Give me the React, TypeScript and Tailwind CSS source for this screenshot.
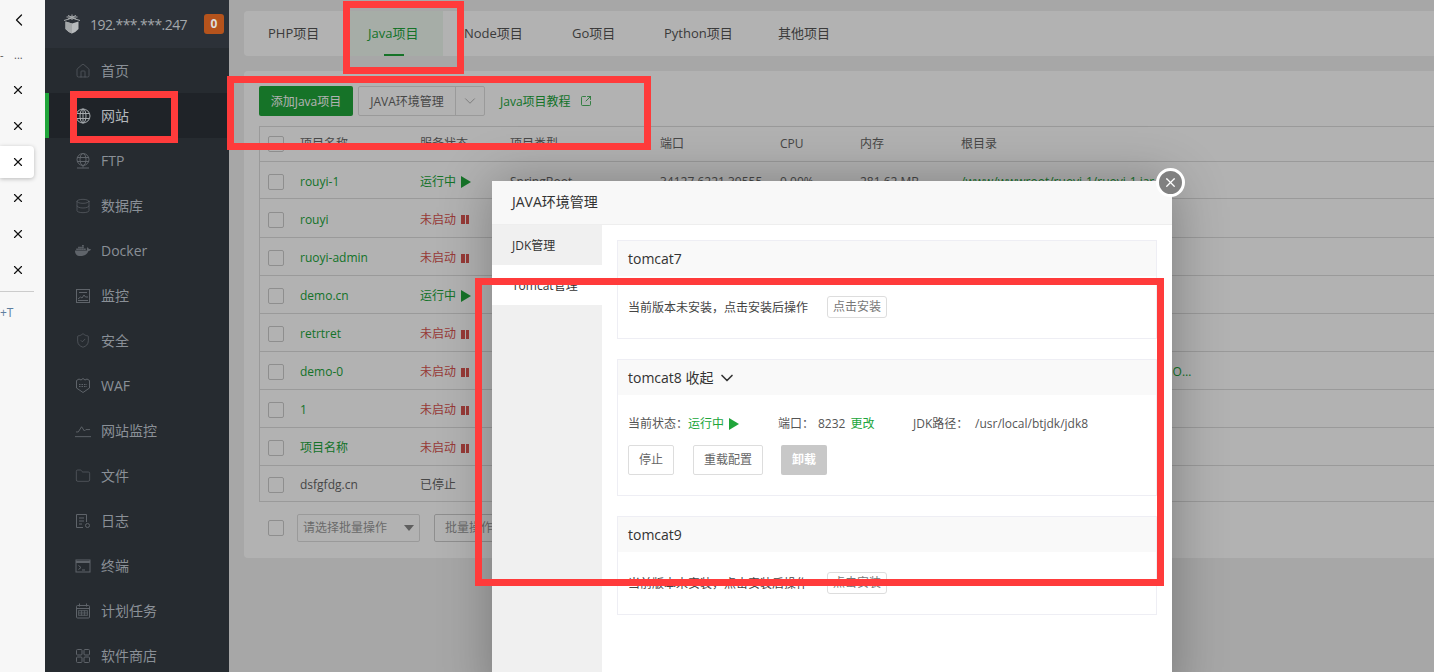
/**
 * Java project page with the JAVA environment dialog open
 * Red boxes are annotations drawn over the screenshot
 */

import { useState } from 'react';
import { ChevronDown, ChevronLeft, Database, Folder, Home, ShieldCheck, SquareArrowOutUpRight, X } from 'lucide-react';
import { FaDocker } from 'react-icons/fa';
import { clsx } from 'clsx';

const FONT = "[font-family:'Open_Sans','Noto_Sans_CJK_SC',sans-serif]";

function GlobeIcon({ bar }: { bar?: boolean }) {
  return (
    <svg width="16" height="16" viewBox="0 0 16 16" fill="none" stroke="currentColor" strokeWidth="1">
      <circle cx="8" cy={bar ? 6.5 : 8} r={bar ? 6 : 7} />
      <ellipse cx="8" cy={bar ? 6.5 : 8} rx="3" ry={bar ? 6 : 7} />
      <path d={bar ? 'M2 4.5h12M2 8.5h12M8 12.5v2M2 15h12' : 'M1.5 5.5h13M1.5 10.5h13M8 1v14'} />
    </svg>
  );
}

function MonitorIcon() {
  return (
    <svg width="16" height="16" viewBox="0 0 16 16" fill="none" stroke="currentColor" strokeWidth="1">
      <rect x="1.5" y="1.5" width="13" height="13" />
      <path d="M4 4.5h8M3 11l2.5-2 1.5 1 2-3 1.5 2H13M3 12.5h10" />
    </svg>
  );
}

function WafIcon() {
  return (
    <svg width="16" height="17" viewBox="0 0 16 17" fill="none" stroke="currentColor" strokeWidth="1">
      <path d="M1.5 3.5 4 2l2 1 2-1.5L10 3l2-1 2.5 1.5V11L8 15.5 1.5 11z" />
      <path d="M4 7.5h8M4 9.5h8" strokeDasharray="1.5 1" />
    </svg>
  );
}

function ChartIcon() {
  return (
    <svg width="17" height="14" viewBox="0 0 17 14" fill="none" stroke="currentColor" strokeWidth="1">
      <path d="M1 8h2.5L7 2.5 10 7l1.5-1.5H16M0 13h17" />
    </svg>
  );
}

function LogIcon() {
  return (
    <svg width="16" height="16" viewBox="0 0 16 16" fill="none" stroke="currentColor" strokeWidth="1">
      <path d="M8 14.5H1.5v-13h10V9M4 5h5M4 8h5M4 11h3" />
      <circle cx="12.5" cy="12.5" r="2" />
    </svg>
  );
}

function TerminalIcon() {
  return (
    <svg width="16" height="14" viewBox="0 0 16 14" fill="none" stroke="currentColor" strokeWidth="1">
      <rect x="1" y="1" width="14" height="12" />
      <path d="M1 3h14" strokeWidth="2" />
      <path d="M3.5 6.5 6 8.5l-2.5 2M7 11h3" />
    </svg>
  );
}

function CalendarIcon() {
  return (
    <svg width="16" height="16" viewBox="0 0 16 16" fill="none" stroke="currentColor" strokeWidth="1">
      <rect x="1.5" y="2.5" width="13" height="12.5" rx="1" />
      <path d="M1.5 5.5h13M4.5 0.5v3M11.5 0.5v3" />
      <path d="M3.5 7.5h9v5h-9zM3.5 9.2h9M3.5 10.9h9M6.5 7.5v5M9.5 7.5v5" strokeWidth="0.7" />
    </svg>
  );
}

function StoreIcon() {
  return (
    <svg width="16" height="16" viewBox="0 0 16 16" fill="none" stroke="currentColor" strokeWidth="1">
      <rect x="1.5" y="1.5" width="5.5" height="5.5" rx="1" />
      <rect x="9" y="1.5" width="5.5" height="5.5" rx="1" />
      <rect x="1.5" y="9" width="5.5" height="5.5" rx="1" />
      <rect x="9" y="9" width="5.5" height="5.5" rx="1" />
    </svg>
  );
}

function Logo() {
  return (
    <svg width="18" height="20" viewBox="0 0 18 20" className="shrink-0">
      <path d="M2.5 7.5 9 9.5l6.5-2V15q-3 3.5-6.5 4.5Q5.500 18.500 2.500 15z" fill="#b8bbbd" />
      <path d="M9 9.500v10Q5.500 18.500 2.500 15V7.500z" fill="#a4a7a9" />
      <path d="M1 6.500 9 4l8 2.500M3.500 3h11M9 0.500V6M5 1.500l8 3.500M13 1.500 5 5" fill="none" stroke="#a8abad" strokeWidth="1" />
    </svg>
  );
}

const navItems = [
  { label: '首页', icon: <Home size={16} strokeWidth={1} /> },
  { label: '网站', icon: <GlobeIcon />, active: true },
  { label: 'FTP', icon: <GlobeIcon bar /> },
  { label: '数据库', icon: <Database size={16} strokeWidth={1} /> },
  { label: 'Docker', icon: <FaDocker size={17} /> },
  { label: '监控', icon: <MonitorIcon /> },
  { label: '安全', icon: <ShieldCheck size={17} strokeWidth={1} /> },
  { label: 'WAF', icon: <WafIcon /> },
  { label: '网站监控', icon: <ChartIcon /> },
  { label: '文件', icon: <Folder size={16} strokeWidth={1} /> },
  { label: '日志', icon: <LogIcon /> },
  { label: '终端', icon: <TerminalIcon /> },
  { label: '计划任务', icon: <CalendarIcon /> },
  { label: '软件商店', icon: <StoreIcon /> },
];

const tabs = [
  { label: 'PHP项目', className: 'w-[100px] pl-[18px]' },
  { label: 'Java项目', className: 'w-[93px] pl-[18px]', active: true },
  { label: 'Node项目', className: 'w-[108px] pl-[21px]' },
  { label: 'Go项目', className: 'w-[92px] pl-[21px]' },
  { label: 'Python项目', className: 'w-[114px] pl-[21px]' },
  { label: '其他项目', className: 'w-[100px] pl-[21px]' },
];

const rows = [
  { name: 'rouyi-1', status: 'run', h: 'h-[37px]', type: 'SpringBoot', port: '34127,6221,39555', cpu: '0.00%', mem: '281.62 MB', path: '/www/wwwroot/ruoyi-1/ruoyi-1.jar' },
  { name: 'rouyi', status: 'off', h: 'h-[39px]' },
  { name: 'ruoyi-admin', status: 'off', h: 'h-[38px]' },
  { name: 'demo.cn', status: 'run', h: 'h-[38px]' },
  { name: 'retrtret', status: 'off', h: 'h-[38px]' },
  { name: 'demo-0', status: 'off', h: 'h-[38px]', path: '/www/wwwroot/demo/demo-SNAPSHOT.jar' },
  { name: '1', status: 'off', h: 'h-[38px]' },
  { name: '项目名称', status: 'off', h: 'h-[38px]' },
  { name: 'dsfgfdg.cn', status: 'stop', h: 'h-[36px]' },
];

const GRID = 'grid grid-cols-[40px_120px_90px_150px_120px_80px_101px_234px] items-center';

function Check({ className }: { className?: string }) {
  return <span className={clsx('block w-4 h-4 border border-[#ccc] rounded-[2px] bg-white', className)} />;
}

function Play({ className }: { className?: string }) {
  return (
    <svg width="10" height="12" viewBox="0 0 10 12" className={className}>
      <path d="M0 0l10 6-10 6z" fill="currentColor" />
    </svg>
  );
}

function Status({ status }: { status: string }) {
  if (status === 'run') {
    return (
      <span className="flex items-center gap-[5px] text-[#20a53a]">
        运行中
        <Play />
      </span>
    );
  }
  if (status === 'off') {
    return (
      <span className="flex items-center gap-[5px] text-[#d9534f]">
        未启动
        <span className="flex gap-[1px]">
          <span className="block w-[3.5px] h-[9px] bg-[#d9534f]" />
          <span className="block w-[3.5px] h-[9px] bg-[#d9534f]" />
        </span>
      </span>
    );
  }
  return <span className="text-[#666]">已停止</span>;
}

function SideRail() {
  return (
    <div className="w-[45px] shrink-0 bg-[#f7f7f7] overflow-hidden text-[#111]">
      <div className="h-9 pt-[3px] pl-[9px] flex items-center">
        <ChevronLeft size={20} strokeWidth={1.5} />
      </div>
      <div className="h-9 flex items-center text-[11px] text-[#555] leading-none">
        <span className="w-[14px]">-</span>
        <span>...</span>
      </div>
      {[0, 1, 2, 3, 4, 5].map((i) => (
        <div key={i} className="h-9 flex items-center">
          <div className={clsx('w-[34px] h-8 flex items-center pl-[11px] rounded-r', i === 2 && 'bg-white shadow-[0_1px_4px_rgba(0,0,0,0.25)]')}>
            <X size={14} strokeWidth={2} />
          </div>
        </div>
      ))}
      <div className="w-[34px] mt-[3px] border-t border-[#ccc]" />
      <div className="mt-[13px] text-[12px] leading-4 text-[#5f7f9f]">+T</div>
    </div>
  );
}

function Sidebar() {
  return (
    <div className="w-[184px] shrink-0 bg-[#262b30] overflow-hidden">
      <div className="h-12 bg-[#2c3138] flex items-center pl-[18px]">
        <Logo />
        <span className="ml-[9px] text-[14px] tracking-[-0.55px] text-[#a3a7ab] whitespace-nowrap">192.***.***.247</span>
        <span className="ml-auto mr-[5px] w-5 h-5 rounded-[3px] bg-[#b5531c] text-[#ddd] text-[12px] font-bold flex items-center justify-center">0</span>
      </div>
      {navItems.map((item) => (
        <div
          key={item.label}
          className={clsx(
            'h-[45px] flex items-center text-[14px]',
            item.active ? 'bg-[#1f2328] border-l-4 border-[#20a53a] pl-[26px] text-[#b4b8bc]' : 'pl-[30px] text-[#8a9097]'
          )}
        >
          <span className={clsx('w-4 flex justify-center', item.active ? 'text-[#a6aaae]' : 'text-[#5f646a]')}>{item.icon}</span>
          <span className="ml-[10px]">{item.label}</span>
        </div>
      ))}
    </div>
  );
}

function ProjectTable() {
  return (
    <div className="ml-[15px] flex-1 bg-white rounded-l-[4px] pl-[15px] overflow-hidden">
      <div className="flex items-center h-[30px] mt-[15px] mb-[10px] text-[12px]">
        <button className="h-[30px] w-[94px] pt-px rounded-[2px] bg-[#20a53a] text-white">添加Java项目</button>
        <div className="ml-[5px] h-[30px] w-[127px] flex border border-[#ddd] rounded-[2px] text-[#666]">
          <span className="w-[97px] pt-px flex items-center justify-center border-r border-[#ddd]">JAVA环境管理</span>
          <span className="flex-1 flex items-center justify-center">
            <ChevronDown size={18} strokeWidth={1} className="text-[#999]" />
          </span>
        </div>
        <span className="ml-[15px] pt-px text-[#20a53a]">Java项目教程</span>
        <SquareArrowOutUpRight size={12} strokeWidth={1.6} className="ml-[9px] text-[#20a53a]" />
      </div>
      <div className="border-l border-t border-[#ddd] text-[12px]">
        <div className={clsx(GRID, 'h-[35px] border-b border-[#ddd] text-[#666]')}>
          <Check className="ml-2" />
          <span>项目名称</span>
          <span>服务状态</span>
          <span>项目类型</span>
          <span>端口</span>
          <span>CPU</span>
          <span>内存</span>
          <span>根目录</span>
        </div>
        {rows.map((row) => (
          <div key={row.name} className={clsx(GRID, row.h, 'pt-[3px] border-b border-[#ddd] text-[#666] whitespace-nowrap')}>
            <Check className="ml-2" />
            <span className={row.status === 'stop' ? 'text-[#666]' : 'text-[#20a53a]'}>{row.name}</span>
            <Status status={row.status} />
            <span>{row.type}</span>
            <span>{row.port}</span>
            <span>{row.cpu}</span>
            <span>{row.mem}</span>
            <span className="truncate text-[#20a53a]">{row.path}</span>
          </div>
        ))}
      </div>
      <div className="flex items-center h-[28px] mt-3 text-[12px] text-[#999]">
        <Check className="ml-[9px]" />
        <div className="ml-[13px] w-[123px] h-[28px] border border-[#ddd] rounded-[2px] flex items-center justify-between px-[5px]">
          请选择批量操作
          <span className="w-0 h-0 border-x-[5px] border-x-transparent border-t-[6px] border-t-[#888]" />
        </div>
        <div className="ml-[14px] w-[80px] h-[28px] pl-[10px] border border-[#ccc] rounded-[2px] flex items-center">批量操作</div>
      </div>
    </div>
  );
}

function InstallCard({ title }: { title: string }) {
  return (
    <div className="border border-[#eeeef4]">
      <div className="h-[35px] flex items-center bg-[#f9f9f9] pl-[10px] text-[14px] text-[#333]">{title}</div>
      <div className="py-5 pl-[10px] flex items-center text-[12px] text-[#444]">
        <span className="w-[199px] pt-[2px]">当前版本未安装，点击安装后操作</span>
        <span className="w-[60px] h-[22px] border border-[#ddd] rounded-[3px] flex items-center justify-center text-[#777]">点击安装</span>
      </div>
    </div>
  );
}

function Tomcat8Card() {
  return (
    <div className="mt-5 border border-[#eeeef4]">
      <div className="h-[35px] flex items-center bg-[#f9f9f9] pl-[10px] text-[14px] text-[#333]">
        tomcat8 收起
        <ChevronDown size={20} strokeWidth={2} className="ml-[3px]" />
      </div>
      <div className="pt-[21px] pb-5 pl-[10px] text-[12px] text-[#555]">
        <div className="flex items-center h-4 whitespace-nowrap">
          <div className="w-[150px] flex items-center">
            当前状态：
            <span className="text-[#20a53a]">运行中</span>
            <Play className="ml-[5px] text-[#20a53a]" />
          </div>
          <div className="w-[135px] flex items-center">
            <span className="w-[40px]">端口：</span>
            8232
            <span className="ml-[5px] text-[#20a53a]">更改</span>
          </div>
          <span className="w-[62px]">JDK路径：</span>
          <span>/usr/local/btjdk/jdk8</span>
        </div>
        <div className="mt-[13px] flex gap-[19px]">
          <span className="w-[46px] h-[30px] border border-[#ddd] rounded-[2px] flex items-center justify-center text-[#666]">停止</span>
          <span className="w-[70px] h-[30px] border border-[#ddd] rounded-[2px] flex items-center justify-center text-[#666]">重载配置</span>
          <span className="-ml-px w-[46px] h-[30px] rounded-[2px] bg-[#c8c8c8] flex items-center justify-center text-white font-semibold">卸载</span>
        </div>
      </div>
    </div>
  );
}

function EnvDialog() {
  const [menu, setMenu] = useState('tomcat');
  return (
    <div className="absolute left-[492px] top-[181px] w-[680px] h-[520px] bg-white shadow-[1px_1px_50px_rgba(0,0,0,0.3)]">
      <div className="h-[44px] pb-[2px] bg-[#f8f8f8] border-b border-[#eee] flex items-center pl-5 text-[14px] text-[#333]">JAVA环境管理</div>
      <button className="absolute -right-[13px] -top-[13px] w-[29px] h-[29px] rounded-full bg-[#808080] border-[3px] border-white flex items-center justify-center text-white">
        <X size={15} strokeWidth={2} />
      </button>
      <div className="flex h-[476px]">
        <div className="w-[110px] shrink-0 bg-[#f0f0f0] text-[12px] text-[#333]">
          <div onClick={() => setMenu('jdk')} className={clsx('h-10 pt-px flex items-center pl-5', menu === 'jdk' && 'bg-white')}>JDK管理</div>
          <div onClick={() => setMenu('tomcat')} className={clsx('h-10 pt-px flex items-center pl-5', menu === 'tomcat' && 'bg-white')}>Tomcat管理</div>
        </div>
        <div className="flex-1 px-[15px] pt-[15px]">
          <InstallCard title="tomcat7" />
          <Tomcat8Card />
          <div className="mt-5">
            <InstallCard title="tomcat9" />
          </div>
        </div>
      </div>
    </div>
  );
}

function RedBox({ className }: { className: string }) {
  return <div className={clsx('absolute border-[7px] border-[#ff3b3b] pointer-events-none', className)} />;
}

export default function App() {
  return (
    <div className={clsx('relative w-[1434px] h-[672px] flex overflow-hidden bg-[#f0f0f0]', FONT)}>
      <SideRail />
      <Sidebar />

      <div className="relative flex-1 min-w-0 bg-[#f0f0f0] pt-[11px] pb-[114px] flex flex-col">
        <div className="ml-[15px] h-[45px] bg-white rounded-l-[4px] flex pl-[6px] mb-[15px] text-[13px] text-[#555] shrink-0">
          {tabs.map((tab) => (
            <div
              key={tab.label}
              className={clsx('relative h-full flex items-center', tab.className, tab.active && 'bg-[#eef8f0] text-[#20a53a]')}
            >
              {tab.label}
              {tab.active && <span className="absolute left-[34px] bottom-0 w-5 h-[2px] bg-[#20a53a]" />}
            </div>
          ))}
        </div>
        <ProjectTable />
        <div className="absolute inset-0 bg-black/30" />
      </div>

      <EnvDialog />

      <RedBox className="left-[343px] top-[1px] w-[121px] h-[73px]" />
      <RedBox className="left-[227px] top-[76px] w-[424px] h-[74px]" />
      <RedBox className="left-[70px] top-[91px] w-[108px] h-[52px]" />
      <RedBox className="left-[475px] top-[278px] w-[689px] h-[308px]" />
    </div>
  );
}
